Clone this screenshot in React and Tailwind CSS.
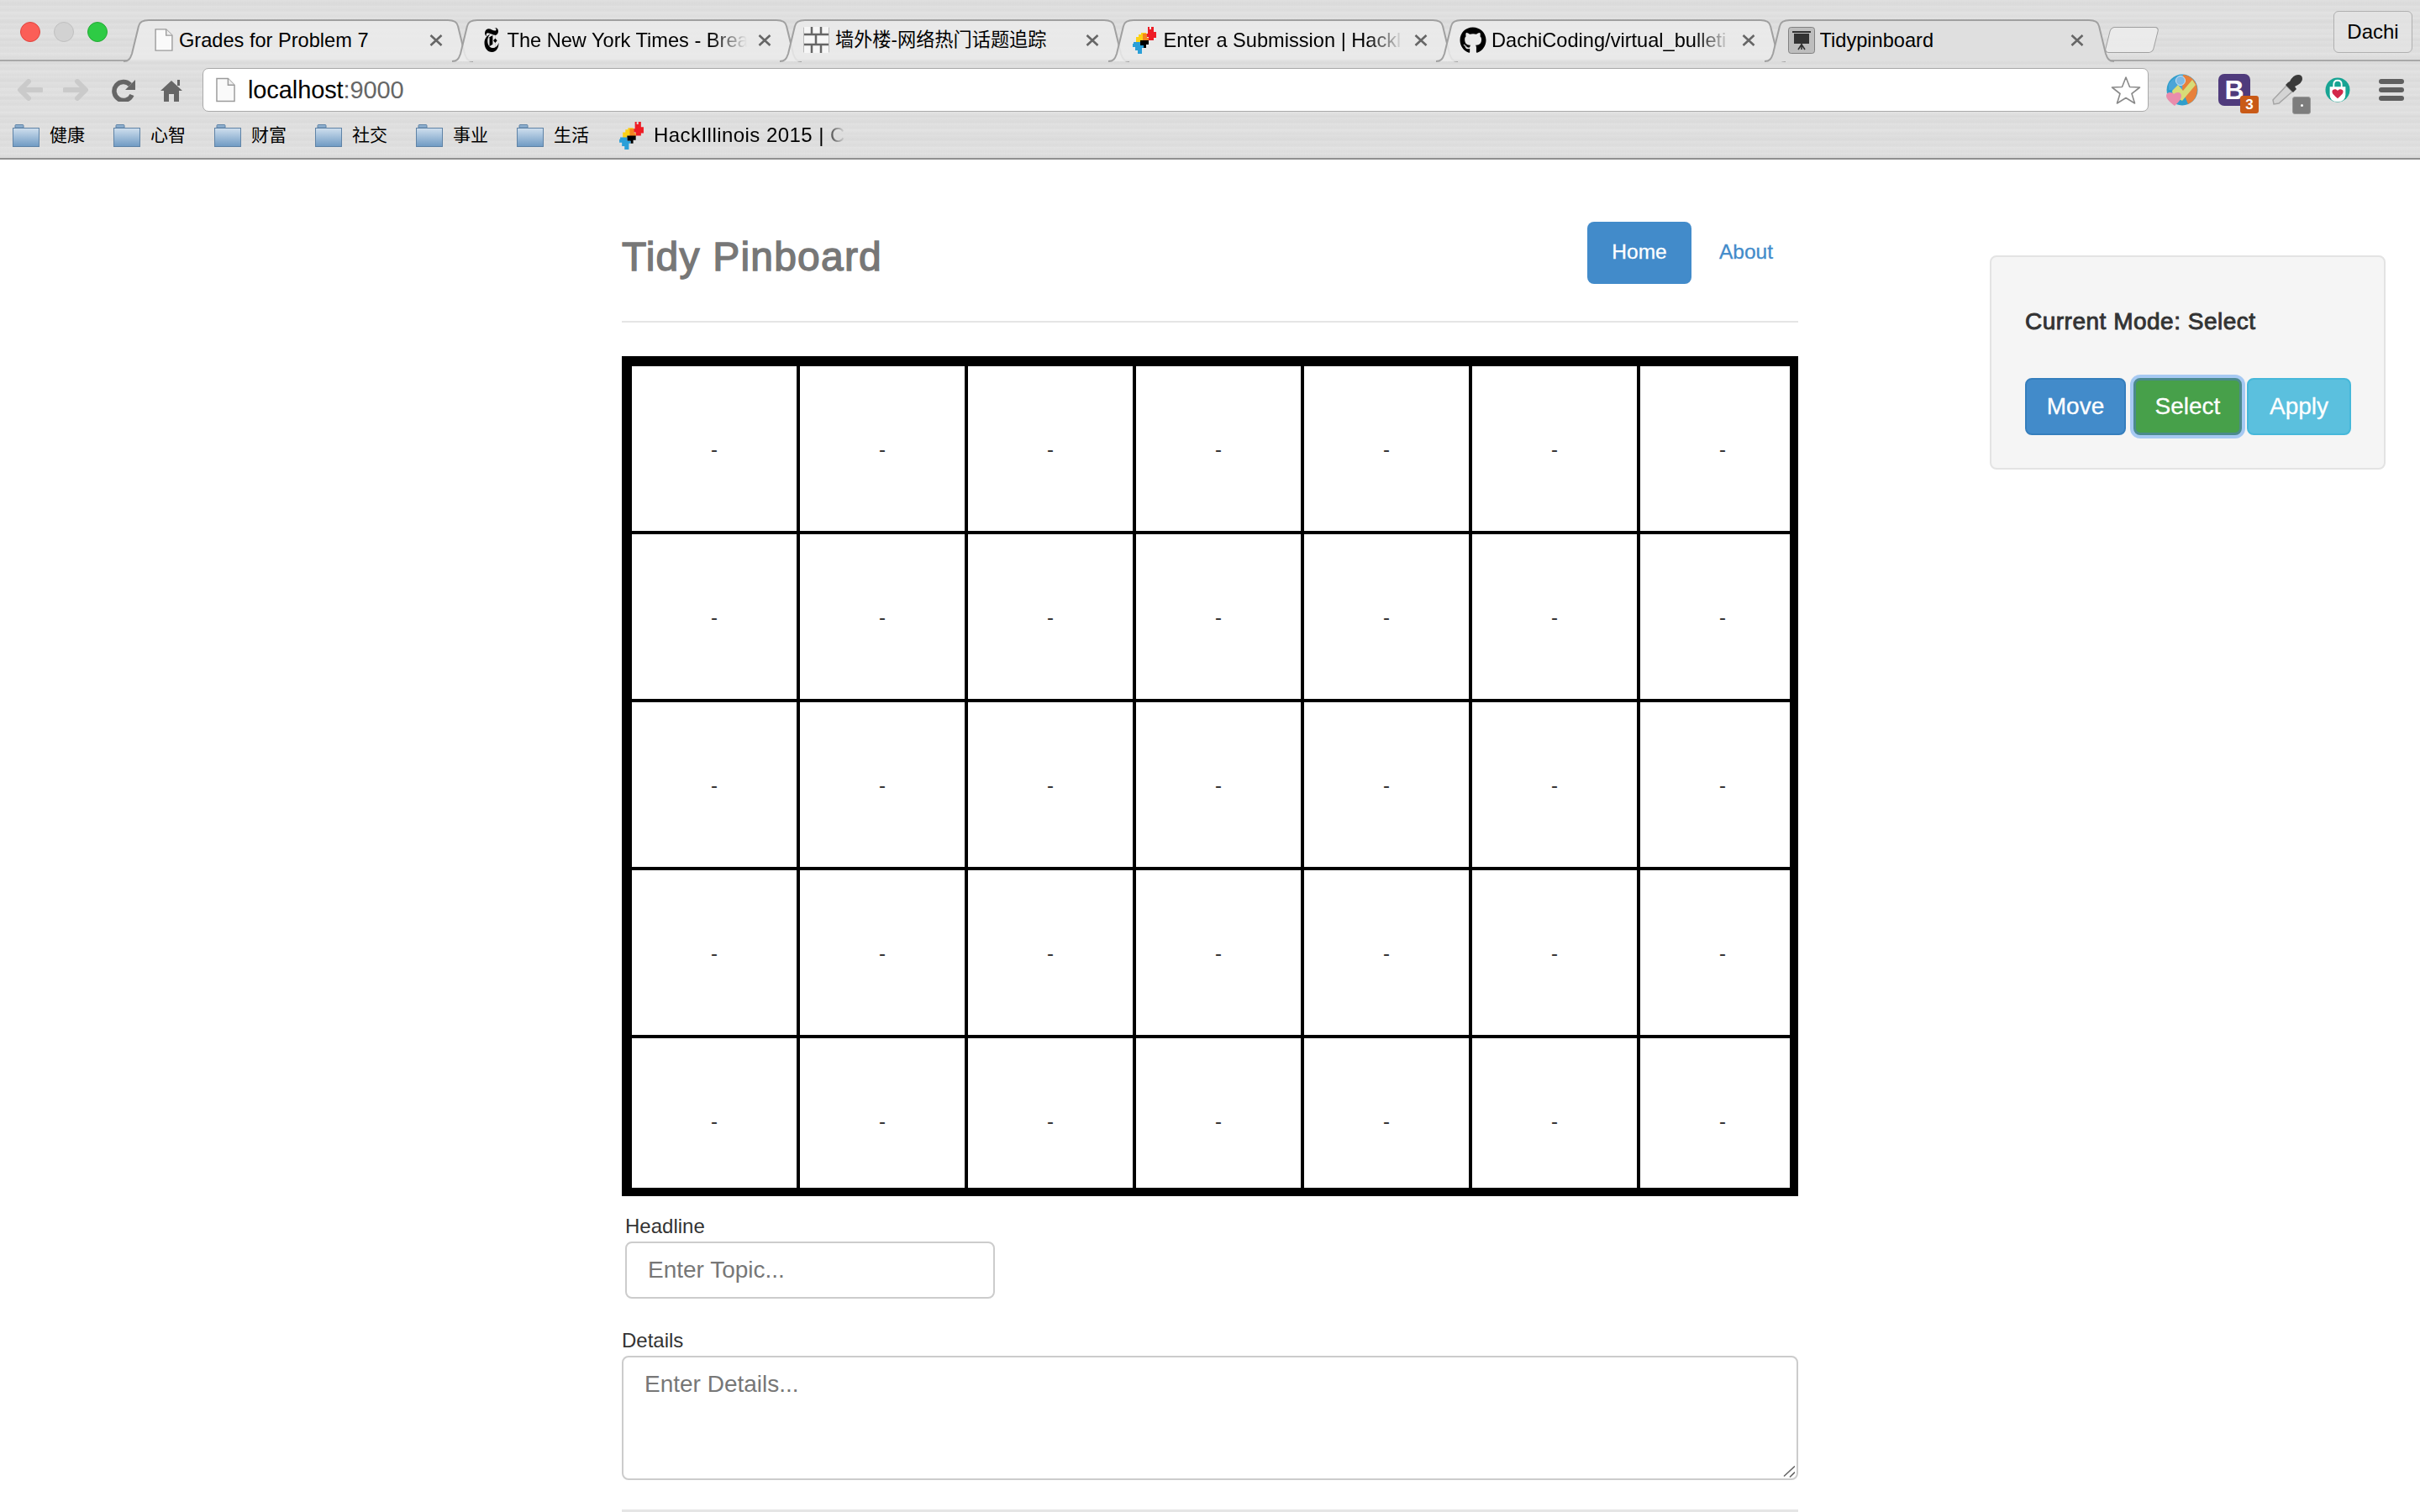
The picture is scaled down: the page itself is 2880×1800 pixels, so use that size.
import React from "react";
import { FaGithub } from "react-icons/fa";
import { SiNewyorktimes } from "react-icons/si";

const texture =
  "bg-[#dedede] bg-[repeating-linear-gradient(180deg,rgba(255,255,255,0.1)_0px,rgba(255,255,255,0)_3px,rgba(0,0,0,0.012)_5px,rgba(0,0,0,0)_7px),repeating-linear-gradient(180deg,rgba(0,0,0,0.012)_0px,rgba(0,0,0,0)_11px,rgba(255,255,255,0.08)_17px,rgba(0,0,0,0)_23px)]";

function PageIcon({ className }) {
  return (
    <svg viewBox="0 0 24 30" className={className}>
      <path d="M1 1H15L23 9V29H1Z" fill="#fafafa" stroke="#9a9a9a" strokeWidth="1.5" />
      <path d="M15 1V9H23" fill="#efefef" stroke="#9a9a9a" strokeWidth="1.5" />
    </svg>
  );
}

function WallIcon() {
  return (
    <svg viewBox="0 0 31 31" className="w-[31px] h-[31px]">
      <rect width="31" height="31" fill="#f6f6f6" />
      <path d="M0 9H31M0 21H31M10 0V9M21 0V9M15 9V21M10 21V31M21 21V31" stroke="#666" strokeWidth="2.5" fill="none" />
      <path d="M0.5 0.5V30.5M30.5 0.5V30.5" stroke="#bbb" fill="none" />
    </svg>
  );
}

function HackIcon({ className }) {
  return (
    <svg viewBox="0 0 32 32" className={className}>
      <path d="M20 0H22V3H24V0H27V6H30V13H27V16H21V12H18V8H20Z" fill="#ee1c25" />
      <path d="M12 7H18V13H21V16H11V19H6V12H9V9H12Z" fill="#fcd116" />
      <path d="M14 8H19V13H21V17H14Z" fill="#f58220" />
      <path d="M11 16H21V21H18V25H15V22H11Z" fill="#000" />
      <path d="M3 18H11V22H15V25H13V32H8V28H5V24H2V20H3Z" fill="#2a9fd8" />
    </svg>
  );
}

function TidyIcon() {
  return (
    <svg viewBox="0 0 32 32" className="w-[32px] h-[32px]">
      <rect x="0.5" y="0.5" width="31" height="31" rx="3" fill="#bdbdbd" stroke="#808080" />
      <path d="M5 5H27V7H5Z" fill="#333" />
      <path d="M7 8H25V20H7Z" fill="#333" />
      <path d="M16 20V27M16 21L12 27M16 21L20 27" stroke="#333" strokeWidth="1.6" fill="none" />
    </svg>
  );
}

const tabs = [
  { title: "Grades for Problem 7", icon: <PageIcon className="w-[22px] h-[27px] ml-[9px]" /> },
  {
    title: "The New York Times - Brea",
    fade: true,
    icon: <SiNewyorktimes preserveAspectRatio="none" className="w-[22px] h-[29px] ml-[8px] text-black" />,
  },
  { title: "墙外楼-网络热门话题追踪", cjk: true, icon: <WallIcon /> },
  { title: "Enter a Submission | Hackl", fade: true, icon: <HackIcon className="w-[32px] h-[32px] -ml-[1px]" /> },
  { title: "DachiCoding/virtual_bulleti", fade: true, icon: <FaGithub className="w-[32px] h-[32px] text-black" /> },
  { title: "Tidypinboard", icon: <TidyIcon />, active: true },
];

function Tab({ title, icon, fade, active, cjk }) {
  return (
    <div className={`relative w-[416px] h-[51px] -mr-[25.5px] shrink-0 ${active ? "z-10" : ""}`}>
      <svg viewBox="0 0 416 51" className="absolute inset-0 w-[416px] h-[51px]">
        <path
          d="M0 50C6 50 8 47 10 41L18 8C19 3 23 1 30 1H386C393 1 397 3 398 8L406 41C408 47 410 50 416 50"
          fill={active ? "#dfdfdf" : "#ebebeb"}
          fillOpacity={active ? "1" : "0.85"}
          stroke="#a0a0a0"
          strokeWidth="2"
        />
      </svg>
      <div className="relative h-[49px] flex items-center pl-[28px] pr-[36px]">
        <div className="w-[38px] shrink-0 flex items-center">{icon}</div>
        <span
          className={`w-[285px] shrink-0 overflow-hidden whitespace-nowrap leading-[30px] text-black ${
            cjk ? "text-[22.2px]" : "text-[23.6px]"
          } ${fade ? "[mask-image:linear-gradient(to_right,black_85%,transparent)]" : ""}`}
        >
          {title}
        </span>
        <svg viewBox="0 0 16 16" className="ml-auto w-[16px] h-[16px]">
          <path d="M1.5 2L14.5 14M14.5 2L1.5 14" stroke="#666" strokeWidth="2.6" fill="none" />
        </svg>
      </div>
    </div>
  );
}

function Folder() {
  return (
    <svg viewBox="0 0 32 27" className="w-[32px] h-[27px] shrink-0">
      <defs>
        <linearGradient id="fold" x1="0" y1="0" x2="0" y2="1">
          <stop offset="0" stopColor="#cfdfee" />
          <stop offset="1" stopColor="#6f9ac3" />
        </linearGradient>
      </defs>
      <path d="M3 4V1.5Q3 .5 4 .5H12Q13 .5 13 1.5V4Z" fill="#8fb0cf" stroke="#5f83a6" />
      <rect x="0.5" y="4.5" width="31" height="22" fill="url(#fold)" stroke="#5f83a6" />
    </svg>
  );
}

function BookmarkFolder({ name }) {
  return (
    <div className="w-[120px] shrink-0 flex items-center gap-[12px]">
      <Folder />
      <span className="text-[21px] leading-[30px] text-black">{name}</span>
    </div>
  );
}

function ColorWheel() {
  return (
    <svg viewBox="0 0 38 38" className="w-[38px] h-[38px]">
      <circle cx="19" cy="19" r="18.5" fill="#2f9ecb" />
      <path d="M19 1A18 18 0 0 1 37 19A18 18 0 0 1 26 36L19 19Z" fill="#e8803a" />
      <path d="M3 12Q10 2 20 1L19 19L3 19Z" fill="#4ba5d8" />
      <path d="M7 20L14 13L20 20L31 7L35 13L19 32L8 26Z" fill="#d7dc78" />
      <circle cx="17" cy="8" r="5.5" fill="#7fb9e4" stroke="#c9e2f5" />
      <path d="M10 38C5 34 0 30 0 26C0 21 7 21 9 24C12 21 18 21 18 26C18 31 13 35 10 38Z" fill="#e98cac" />
    </svg>
  );
}

function Dropper() {
  return (
    <svg viewBox="0 0 38 36" className="w-[38px] h-[36px]">
      <path d="M1 30L17 13L24 20L8 34L2 35Z" fill="#d4d4d4" stroke="#a5a5a5" strokeWidth="1.5" />
      <path d="M16 12L25 21L29 17L27 14Q36 10 36 5Q36 0 31 0Q25 0 21 8L19 9Z" fill="#3a3a3a" />
    </svg>
  );
}

function HeartBag() {
  return (
    <svg viewBox="0 0 32 32" className="w-[30px] h-[32px]">
      <circle cx="16" cy="16" r="15.5" fill="#17a493" />
      <path d="M6 12H26V22Q26 31 16 31Q6 31 6 22Z" fill="#fff" />
      <path d="M11 13V9Q11 4 16 4Q21 4 21 9V13" fill="none" stroke="#fff" strokeWidth="2" />
      <path d="M16 27C12 23 9 21 9 18C9 15 14 14 16 17C18 14 23 15 23 18C23 21 20 23 16 27Z" fill="#d3274a" />
    </svg>
  );
}

function Chrome() {
  return (
    <header className={`h-[190px] border-b-2 border-[#8f8f8f] ${texture}`}>
      <div className="h-[73px] border-b-2 border-[#a8a8a8] flex">
        <div className="w-[147px] shrink-0 pl-[24px] pt-[26px] flex gap-[16px]">
          <span className="w-[24px] h-[24px] rounded-full bg-[#fb5e57] border border-[#e0443e]" />
          <span className="w-[24px] h-[24px] rounded-full bg-[#d2d2d2] border border-[#c0c0c0]" />
          <span className="w-[24px] h-[24px] rounded-full bg-[#2ecb45] border border-[#24aa35]" />
        </div>
        <div className="flex pt-[23px]">
          {tabs.map((t) => (
            <Tab key={t.title} {...t} />
          ))}
        </div>
        <div className="mt-[32px] ml-[18px] w-[58px] h-[31px] shrink-0 -skew-x-[14deg] rounded-[5px] bg-[#eeeeee]/80 border border-[#a0a0a0]" />
        <div className="ml-auto mr-[9px] mt-[13px] w-[94px] h-[50px] flex items-center justify-center rounded-[6px] border border-[#b0b0b0] bg-[#e4e4e4]/70 text-[24px] text-black">
          Dachi
        </div>
      </div>
      <div className="h-[68px] flex items-center">
        <svg viewBox="0 0 31 26" className="ml-[20px] w-[31px] h-[26px]">
          <path d="M29 13H5M14 3L4 13L14 23" stroke="#cacaca" strokeWidth="6" strokeLinecap="round" strokeLinejoin="round" fill="none" />
        </svg>
        <svg viewBox="0 0 31 26" className="ml-[24px] w-[31px] h-[26px]">
          <path d="M2 13H26M17 3L27 13L17 23" stroke="#cacaca" strokeWidth="6" strokeLinecap="round" strokeLinejoin="round" fill="none" />
        </svg>
        <svg viewBox="0 0 29 27" className="ml-[27px] w-[29px] h-[27px]">
          <path d="M22 7A11 11 0 1 0 24 19" stroke="#666" strokeWidth="5.5" fill="none" />
          <path d="M28 1V13H16Z" fill="#666" />
        </svg>
        <svg viewBox="0 0 26 27" className="ml-[29px] w-[26px] h-[27px]">
          <path d="M13 2L26 14H22V27H16V18H10V27H4V14H0Z" fill="#666" />
          <path d="M20 1H23V8H20Z" fill="#666" />
        </svg>
        <div className="ml-[24px] w-[2316px] h-[52px] shrink-0 flex items-center bg-white border border-[#a9a9a9] rounded-[7px] pl-[15px] pr-[8px]">
          <PageIcon className="w-[23px] h-[30px] shrink-0" />
          <span className="ml-[15px] text-[29px] leading-[40px] tracking-[-0.1px] text-black">
            localhost<span className="text-[#666666]">:9000</span>
          </span>
          <svg viewBox="0 0 36 35" className="ml-auto w-[36px] h-[35px]">
            <path d="M18 2L22.5 13.5L34.5 14L25 21.5L28.5 33L18 26.5L7.5 33L11 21.5L1.5 14L13.5 13.5Z" fill="#fff" stroke="#8a8a8a" strokeWidth="1.6" strokeLinejoin="round" />
          </svg>
        </div>
        <div className="ml-[21px] w-[38px] h-[38px] shrink-0"><ColorWheel /></div>
        <div className="ml-[24px] relative w-[38px] h-[38px] shrink-0 rounded-[7px] bg-[#4f3b7c] flex items-center justify-center">
          <span className="text-[32px] leading-none font-bold text-white">B</span>
          <span className="absolute left-[26px] top-[26px] w-[22px] h-[21px] rounded-[3px] bg-[#c95a17] flex items-center justify-center text-[17px] leading-none font-bold text-white">3</span>
        </div>
        <div className="ml-[26px] relative w-[38px] h-[36px] shrink-0">
          <Dropper />
          <span className="absolute left-[24px] top-[26px] w-[22px] h-[21px] rounded-[3px] bg-[#7d7d7d] border border-[#999] flex items-center justify-center">
            <span className="w-[3px] h-[3px] bg-white rounded-full" />
          </span>
        </div>
        <div className="ml-[25px] w-[30px] h-[32px] shrink-0"><HeartBag /></div>
        <div className="ml-[34px] w-[30px] shrink-0 flex flex-col gap-[4px]">
          <span className="h-[6px] rounded-full bg-[#5f5f5f]" />
          <span className="h-[6px] rounded-full bg-[#5f5f5f]" />
          <span className="h-[6px] rounded-full bg-[#5f5f5f]" />
        </div>
      </div>
      <div className="h-[47px] flex items-center pl-[15px] pb-[7px]">
        {["健康", "心智", "财富", "社交", "事业", "生活"].map((n) => (
          <BookmarkFolder key={n} name={n} />
        ))}
        <HackIcon className="w-[33px] h-[33px] shrink-0" />
        <span className="ml-[10px] w-[228px] overflow-hidden whitespace-nowrap text-[24px] tracking-[0.45px] leading-[30px] text-black [mask-image:linear-gradient(to_right,black_88%,transparent)]">
          HackIllinois 2015 | Cl
        </span>
      </div>
    </header>
  );
}

function Board() {
  const cells = Array.from({ length: 35 }, (_, i) => i);
  return (
    <div className="mt-[40px] w-[1400px] h-[1000px] border-t-[12px] border-l-[12px] border-r-[10px] border-b-[10px] border-black bg-black overflow-hidden">
      <div className="grid grid-cols-[repeat(7,196px)] auto-rows-[196px] gap-[4px]">
        {cells.map((i) => (
          <div key={i} className="bg-white flex items-center justify-center pt-[2px] text-[24px] leading-[34px] text-[#333333]">
            -
          </div>
        ))}
      </div>
    </div>
  );
}

export default function App() {
  return (
    <div className="w-[2880px] h-[1800px] overflow-hidden bg-white font-['Liberation_Sans','Noto_Sans_CJK_SC',sans-serif]">
      <Chrome />
      <main className="flex">
        <div className="ml-[740px] w-[1400px] shrink-0">
          <div className="h-[194px] border-b-2 border-[#e5e5e5] pt-[74px] flex items-start justify-between">
            <h3 className="mt-[12px] text-[48px] leading-[60px] font-normal tracking-[1.2px] [-webkit-text-stroke:1.4px_#777777] text-[#777777]">Tidy Pinboard</h3>
            <nav className="flex gap-[4px] mr-[1px] text-[24.5px] leading-[34px] [-webkit-text-stroke:0.3px]">
              <a className="w-[124px] pt-[19px] pb-[21px] text-center rounded-[8px] bg-[#428bca] text-white">Home</a>
              <a className="w-[122px] pt-[19px] pb-[21px] text-center rounded-[8px] text-[#428bca]">About</a>
            </nav>
          </div>
          <Board />
          <label className="block mt-[19px] ml-[4px] text-[24px] leading-[34px] text-[#333333]">Headline</label>
          <input
            placeholder="Enter Topic..."
            className="block mt-[1px] ml-[4px] w-[440px] h-[68px] px-[25px] border-2 border-[#cccccc] rounded-[8px] bg-white text-[28px] placeholder:text-[#777777] placeholder:opacity-100 outline-none"
          />
          <label className="block mt-[33px] text-[24px] leading-[34px] text-[#333333]">Details</label>
          <div className="relative mt-[1px] w-[1400px]">
            <textarea
              placeholder="Enter Details..."
              className="block w-[1400px] h-[148px] px-[25px] py-[12px] resize-none border-2 border-[#cccccc] rounded-[8px] bg-white text-[28px] leading-[40px] placeholder:text-[#777777] placeholder:opacity-100 outline-none"
            />
            <svg viewBox="0 0 14 14" className="absolute right-[4px] bottom-[3px] w-[14px] h-[14px]">
              <path d="M1 12.5L14 0.5M8 13.5L14 7.5" stroke="#666" strokeWidth="1.6" fill="none" />
            </svg>
          </div>
          <div className="mt-[35px] h-[3px] bg-[#e5e5e5]" />
        </div>
        <aside className="ml-[228px] mt-[114px] w-[471px] h-[255px] shrink-0 bg-[#f5f5f5] border-2 border-[#e3e3e3] rounded-[8px] pl-[40px] pt-[57px]">
          <h4 className="text-[28px] leading-[40px] font-normal tracking-[0.5px] [-webkit-text-stroke:0.9px_#333333] text-[#333333]">Current Mode: Select</h4>
          <div className="mt-[47px] flex items-start [-webkit-text-stroke:0.3px]">
            <button className="w-[120px] h-[68px] rounded-[8px] bg-[#428bca] border-2 border-[#357ebd] text-[28px] text-white">Move</button>
            <button className="ml-[9px] w-[129px] h-[68px] rounded-[8px] bg-[#47a04a] border-[3px] border-[#4b8a8d] ring-[4px] ring-[#a6c9f2] text-[28px] text-white">Select</button>
            <button className="ml-[6px] w-[124px] h-[68px] rounded-[8px] bg-[#5bc0de] border-2 border-[#46b8da] text-[28px] text-white">Apply</button>
          </div>
        </aside>
      </main>
    </div>
  );
}
